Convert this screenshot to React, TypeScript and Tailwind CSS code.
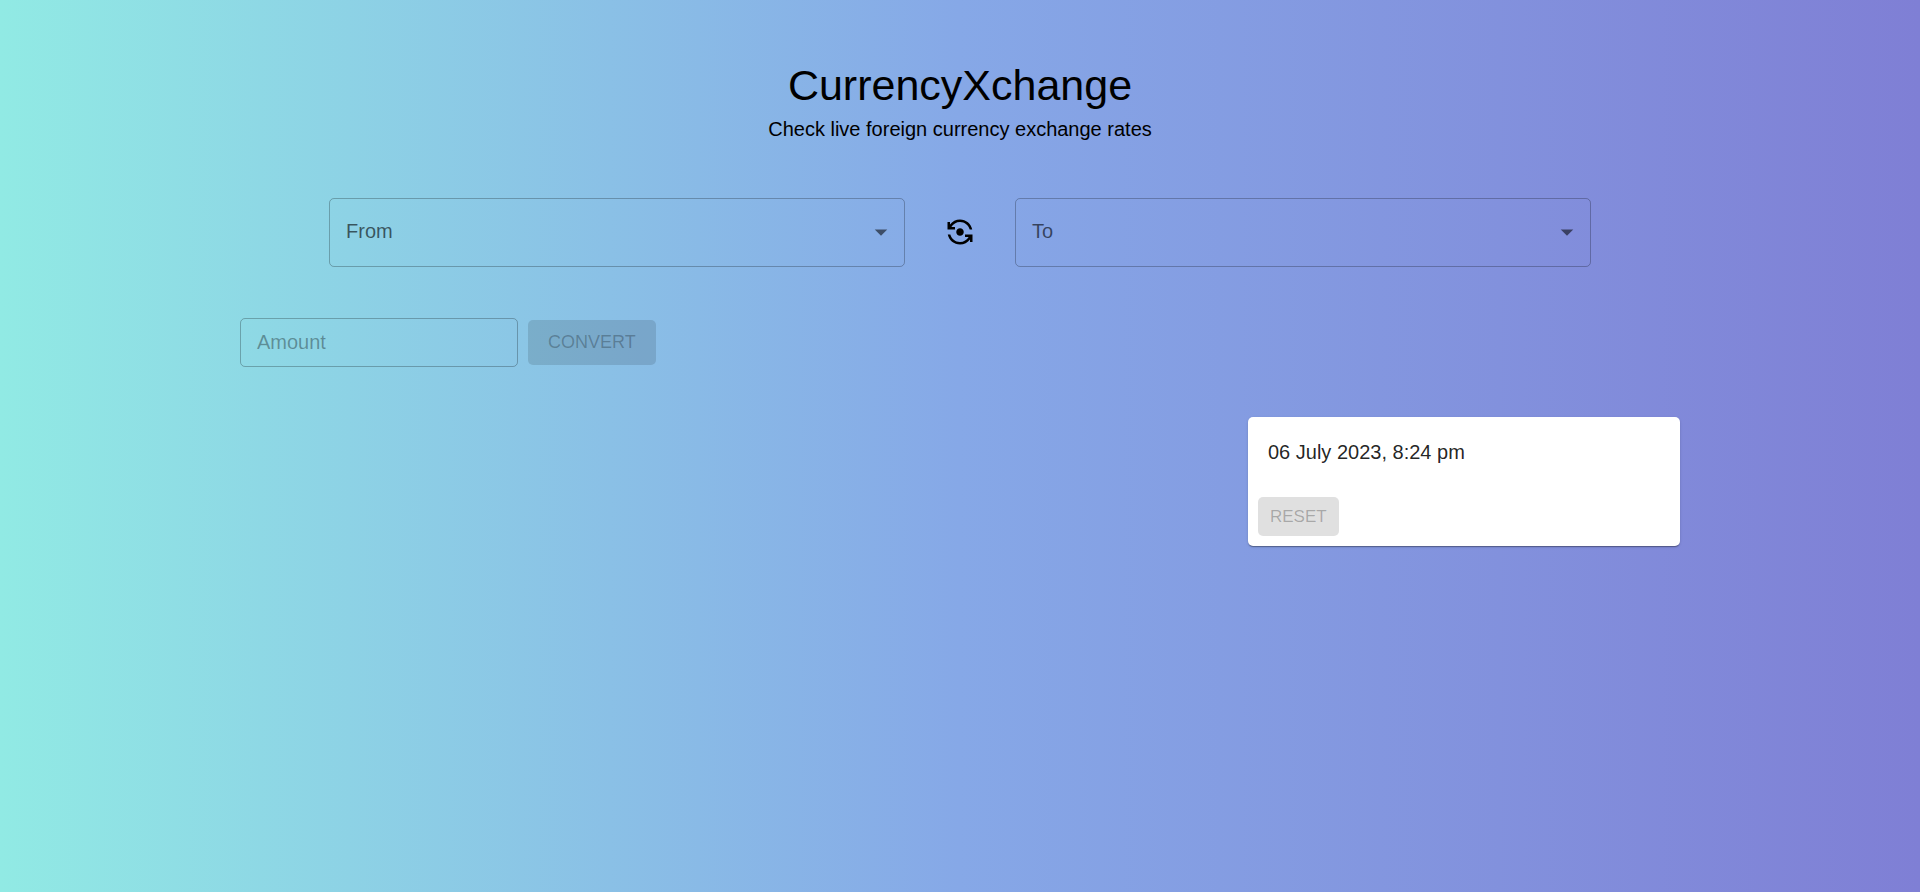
import { useId, useState } from "react";
import { MdArrowDropDown, MdFlipCameraAndroid } from "react-icons/md";

const currencies = ["USD", "EUR", "GBP", "INR", "JPY"];

function CurrencySelect({ label }: { label: string }) {
  const id = useId();
  const [value, setValue] = useState("");
  return (
    <div className="grid w-[30%] items-center">
      <select
        id={id}
        value={value}
        onChange={(event) => setValue(event.target.value)}
        className="col-start-1 row-start-1 h-[69px] w-full appearance-none rounded-[5px] border border-black/25 bg-transparent pr-14 pl-4 text-[20px]"
      >
        <option value=""></option>
        {currencies.map((code) => (
          <option key={code}>{code}</option>
        ))}
      </select>
      {value === "" && (
        <label
          htmlFor={id}
          className="pointer-events-none col-start-1 row-start-1 ml-[17px] justify-self-start pb-1 text-[20px] text-black/60"
        >
          {label}
        </label>
      )}
      <MdArrowDropDown
        aria-hidden="true"
        className="pointer-events-none col-start-1 row-start-1 mr-[9px] mb-0.5 justify-self-end text-[30px] text-black/55"
      />
    </div>
  );
}

export default function App() {
  return (
    <div className="min-h-screen bg-[linear-gradient(to_right,#91eae4,#86a8e7,#7f7fd5)] pt-[59px] font-['Liberation_Sans',Arial,sans-serif] text-black">
      <header className="text-center">
        <h1 className="text-[43px] leading-[52px]">CurrencyXchange</h1>
        <p className="mt-[3px] text-[20px] leading-[30px]">
          Check live foreign currency exchange rates
        </p>
      </header>

      <main>
        <div className="mt-[54px] flex items-center justify-center gap-10">
          <CurrencySelect label="From" />
          <button type="button" aria-label="Swap currencies" className="pb-0.5 text-[30px]">
            <MdFlipCameraAndroid />
          </button>
          <CurrencySelect label="To" />
        </div>

        <div className="mx-auto w-3/4">
          <form className="mt-[51px] flex items-center gap-2.5">
            <div className="grid items-center">
              <input
                id="amount"
                type="text"
                disabled
                className="col-start-1 row-start-1 h-[49px] w-[278px] rounded-[5px] border border-black/25 px-4 text-[20px]"
              />
              <label
                htmlFor="amount"
                className="pointer-events-none col-start-1 row-start-1 ml-[17px] justify-self-start pb-0.5 text-[20px] text-black/35"
              >
                Amount
              </label>
            </div>
            <button
              type="button"
              disabled
              className="h-[45px] rounded-[5px] bg-black/12 px-5 text-[18px] text-black/26"
            >
              CONVERT
            </button>
          </form>

          <section className="mt-[50px] ml-auto w-[30%] rounded-[5px] bg-white p-2.5 shadow-[0_2px_1px_-1px_rgba(0,0,0,0.2),0_1px_1px_rgba(0,0,0,0.14),0_1px_3px_rgba(0,0,0,0.12)]">
            <p className="px-2.5 pt-2.5 text-[20px] leading-[30px] text-black/87">
              06 July 2023, 8:24 pm
            </p>
            <button
              type="button"
              disabled
              className="mt-[30px] block h-[39px] rounded-[5px] bg-black/12 px-3 text-[17px] text-black/26"
            >
              RESET
            </button>
          </section>
        </div>
      </main>
    </div>
  );
}
